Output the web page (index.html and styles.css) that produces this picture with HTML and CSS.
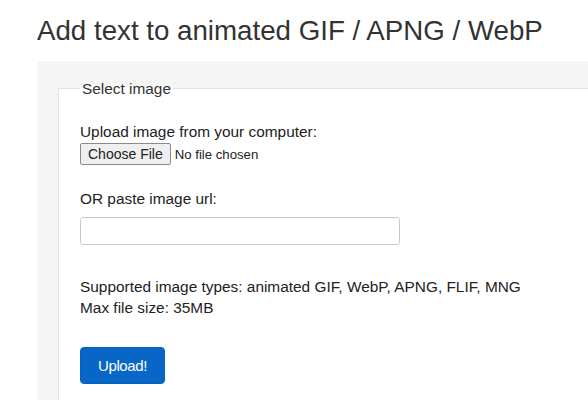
FILE: index.html
```html
<!DOCTYPE html>
<html lang="en">
<head>
<meta charset="utf-8">
<title>Add text to animated GIF / APNG / WebP</title>
<link rel="stylesheet" href="styles.css">
</head>
<body>
<h1 class="title">Add text to animated GIF / APNG / WebP</h1>
<div class="panel">
  <form class="form">
    <fieldset class="box">
      <legend class="box-legend">Select image</legend>
      <div class="group">
        <label class="label" for="file">Upload image from your computer:</label>
        <input class="file" type="file" id="file">
      </div>
      <div class="group group-url">
        <label class="label" for="url">OR paste image url:</label>
        <input class="url" type="text" id="url">
      </div>
      <p class="info">Supported image types: animated GIF, WebP, APNG, FLIF, MNG<br>Max file size: 35MB</p>
      <button class="upload" type="button">Upload!</button>
    </fieldset>
  </form>
</div>
</body>
</html>
```
FILE: styles.css
```css
html, body {
  overflow: hidden;
}
body {
  margin: 0;
  font-family: "Liberation Sans", Arial, sans-serif;
  font-size: 15.4px;
  line-height: 21px;
  color: #222;
  background: #fff;
}
.title {
  margin: 15px 0 0 37px;
  font-size: 27.7px;
  line-height: 32px;
  font-weight: normal;
  color: #333;
}
.panel {
  box-sizing: border-box;
  height: 339px;
  margin: 14px 0 0 37px;
  padding: 17px 0 0 21px;
  background: #f5f5f6;
  overflow: hidden;
}
.form {
  margin: 0 -40px 0 0;
}
.box {
  margin: 0;
  padding: 22px 21px 30px 21px;
  border: 1px solid #e2e2e2;
  background: #fff;
}
.box-legend {
  padding: 0 2px;
  color: #333;
}
.label {
  display: block;
}
.file {
  display: block;
  margin: 1px 0 0 0;
  font-family: "Liberation Sans", Arial, sans-serif;
  font-size: 13.2px;
  line-height: 16px;
  color: #222;
}
.file::file-selector-button {
  font-family: "Liberation Sans", Arial, sans-serif;
  font-size: 14px;
  line-height: 16px;
  height: 22px;
  padding: 1px 7px;
  margin-right: 4px;
  color: #222;
  background: #efefef;
  border: 1px solid #8a8a8a;
  border-radius: 2px;
}
.group-url {
  margin-top: 23px;
}
.url {
  display: block;
  box-sizing: border-box;
  width: 320px;
  height: 28px;
  margin-top: 8px;
  border: 1px solid #c9c9c9;
  border-radius: 3px;
  background: #fff;
}
.info {
  margin: 31px 0 0 0;
}
.upload {
  display: block;
  margin-top: 29px;
  box-sizing: border-box;
  width: 85px;
  height: 37px;
  padding: 0;
  font-family: "Liberation Sans", Arial, sans-serif;
  font-size: 15px;
  letter-spacing: -0.4px;
  color: #fff;
  background: #0866c6;
  border: 1px solid #0660bd;
  border-radius: 4px;
}
```
